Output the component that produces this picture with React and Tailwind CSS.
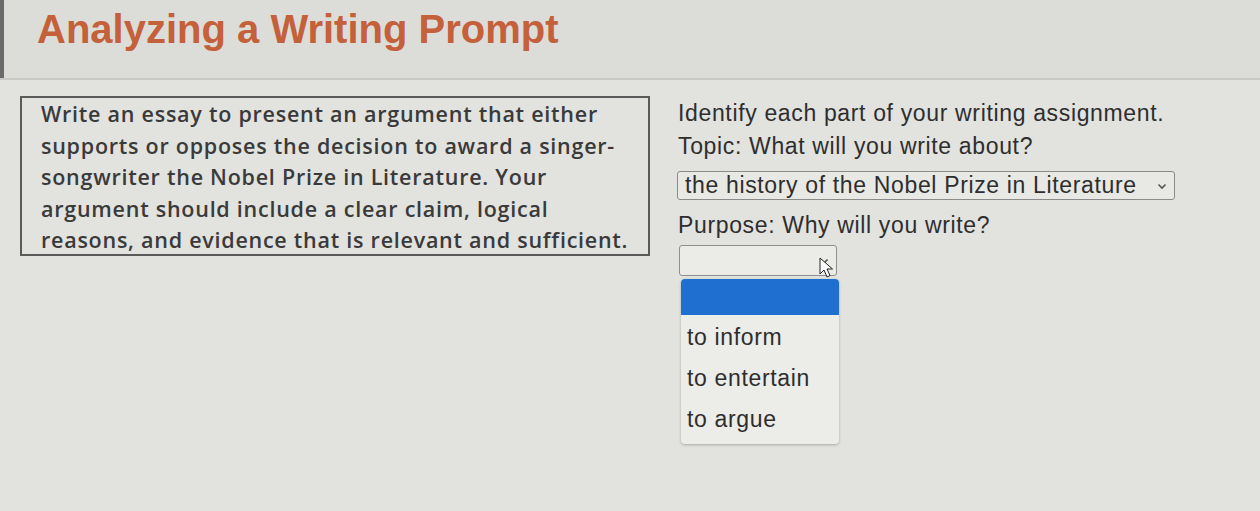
export default function App() {
  const options = ['to inform', 'to entertain', 'to argue']
  const prompt = [
    'Write an essay to present an argument that either',
    'supports or opposes the decision to award a singer-',
    'songwriter the Nobel Prize in Literature. Your',
    'argument should include a clear claim, logical',
    'reasons, and evidence that is relevant and sufficient.',
  ]

  return (
    <div className="h-[511px] w-[1260px] overflow-hidden bg-[#e2e2df] text-[#2e2e2e]" style={{ fontFamily: '"Liberation Sans", Arial, sans-serif' }}>
      <div className="flex h-[80px] border-b-2 border-[#c9c9c6] bg-[#dcdcd9]">
        <div className="w-[4px] bg-[#6b6b6b]" />
        <h1 className="pl-[33px] pt-[6px] text-[40px] font-bold leading-[46px] text-[#c4603a]">
          Analyzing a Writing Prompt
        </h1>
      </div>

      <div className="flex gap-[27px] pl-[20px] pt-[16px]">
        <div
          className="h-[160px] w-[630px] border-2 border-[#5a5a5a] pl-[19px] pt-[0px] text-[21.5px] font-semibold leading-[31.5px] text-[#3a3a3a]"
          style={{ fontFamily: '"Open Sans", "Liberation Sans", sans-serif', letterSpacing: '0.75px' }}
        >
          {prompt.map((l) => (
            <div key={l} className="whitespace-nowrap">{l}</div>
          ))}
        </div>

        <div className="flex flex-col pt-[4px] text-[23px] leading-[27px] tracking-[0.65px]">
          <div className="pl-[1px]">Identify each part of your writing assignment.</div>
          <div className="mt-[6px] pl-[1px]">Topic: What will you write about?</div>
          <div className="mt-[11px] flex h-[29px] w-[498px] items-center justify-between rounded-[3px] border border-[#8a8a8a] bg-[#e8e8e5] pl-[7px] pr-[6px]">
            <span>the history of the Nobel Prize in Literature</span>
            <svg width="12" height="12" viewBox="0 0 12 12" fill="none" stroke="#555" strokeWidth="1.6">
              <path d="M2.5 4.5 6 8l3.5-3.5" />
            </svg>
          </div>
          <div className="mt-[12px] pl-[1px]">Purpose: Why will you write?</div>
          <div className="relative ml-[2px] mt-[6px] w-[160px]">
            <div className="flex h-[31px] w-[158px] items-center justify-end rounded-[3px] border border-[#8e8e8e] bg-[#ebebe8] pr-[6px]">
              <svg width="12" height="12" viewBox="0 0 12 12" fill="none" stroke="#555" strokeWidth="1.6">
                <path d="M2.5 4.5 6 8l3.5-3.5" />
              </svg>
            </div>
            <svg className="absolute left-[140px] top-[12px]" width="14" height="22" viewBox="0 0 14 22">
              <path d="M1 1v16l4-4 3 7 3-1.5-3-6.5h5.5Z" fill="#fff" stroke="#222" strokeWidth="1" />
            </svg>
            <div className="ml-[2px] mt-[3px] w-[158px] overflow-hidden rounded-[4px] bg-[#ecece9] shadow-[0_1px_3px_rgba(0,0,0,0.25)]">
              <div className="h-[36px] bg-[#1f6fd0]" />
              <div className="flex flex-col pb-[4px] pl-[6px] pt-[2px]">
                {options.map((o) => (
                  <div key={o} className="h-[41px] leading-[41px]">{o}</div>
                ))}
              </div>
            </div>
          </div>
        </div>
      </div>
    </div>
  )
}
